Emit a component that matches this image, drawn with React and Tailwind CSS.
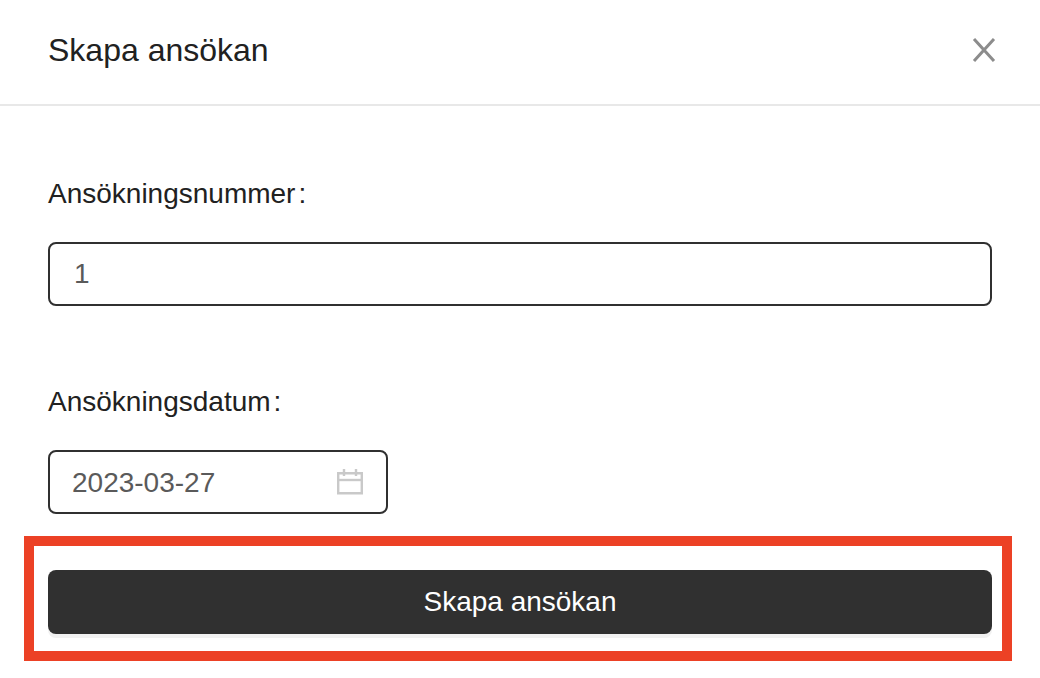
import React from 'react';

const CalendarIcon = () => (
  <svg width="26" height="26" viewBox="0 0 26 26" fill="none" stroke="#c9c9c9" strokeWidth="2.4">
    <path d="M1.2 4.2h23.6v20H1.2z" />
    <path d="M1.2 11h23.6" />
    <path d="M7 0v7M19 0v7" />
  </svg>
);

const CloseIcon = () => (
  <svg width="24" height="24" viewBox="0 0 24 24" fill="none" stroke="#8c8c8c" strokeWidth="3">
    <path d="M2 1l20 22M22 1L2 23" />
  </svg>
);

const App = () => {
  return (
    <div className="w-[1040px] h-[678px] bg-white overflow-hidden font-['Liberation_Sans',Arial,sans-serif] text-[#212121]">
      <div className="h-[106px] border-b-2 border-[#e8e8e8] pl-12 pr-[44px] flex items-center justify-between">
        <h1 className="text-[32px] leading-none -mt-[5px]">Skapa ansökan</h1>
        <button className="-mt-[4px]">
          <CloseIcon />
        </button>
      </div>

      <div className="px-12 pt-[73px]">
        <label className="block text-[28px] leading-[30px]">
          Ansökningsnummer<span className="ml-[3px]">:</span>
        </label>
        <input
          defaultValue="1"
          className="block mt-[33px] w-[944px] h-[64px] px-6 border-2 border-[#303030] rounded-lg text-[28px] text-[#5a5a5a] outline-none"
        />

        <label className="block mt-[81px] text-[28px] leading-[30px]">
          Ansökningsdatum<span className="ml-[3px]">:</span>
        </label>
        <div className="mt-[33px] w-[340px] h-[64px] pl-[22px] pr-[23px] border-2 border-[#303030] rounded-lg flex items-center justify-between">
          <span className="mt-[2px] text-[28px] text-[#5a5a5a]">2023-03-27</span>
          <CalendarIcon />
        </div>
      </div>

      <div className="mt-[22px] ml-6 mr-[28px] h-[125px] border-[10px] border-[#ec4125] pl-[14px] pr-[10px] pt-[24px]">
        <button className="w-full h-[64px] bg-[#303030] text-white text-[28px] rounded-lg shadow-[0_4px_0_#f1f1f1]">
          Skapa ansökan
        </button>
      </div>
    </div>
  );
};

export default App;
